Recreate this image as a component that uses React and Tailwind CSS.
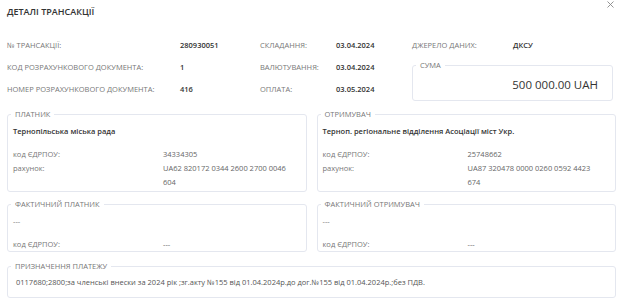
import React from "react";

function Box({ title, className = "", children }) {
  return (
    <fieldset className={"border border-[#e4e7ef] rounded-[3px] " + className}>
      <legend className="ml-[3px] px-[4px] text-[7.5px] leading-[10px] text-[#777] uppercase">{title}</legend>
      {children}
    </fieldset>
  );
}

function Party({ title, name, code, account, labelW }) {
  return (
    <Box title={title} className="flex-1">
      <div className="px-[5px] pt-[5px] pb-[2px] text-[7.5px] leading-[14px]">
        <div className="font-semibold text-[#333]">{name}</div>
        <div className={"mt-[9px] grid " + labelW}>
          <div className="text-[#777]">код ЄДРПОУ:</div>
          <div className="text-[#666]">{code}</div>
          <div className="text-[#777]">рахунок:</div>
          <div className="text-[#666] pr-[8px]">{account}</div>
        </div>
      </div>
    </Box>
  );
}

function Actual({ title, labelW }) {
  return (
    <Box title={title} className="flex-1">
      <div className="px-[5px] pt-[5px] text-[7.5px] leading-[14px]">
        <div className="text-[#777]">---</div>
        <div className={"mt-[9px] grid " + labelW}>
          <div className="text-[#777]">код ЄДРПОУ:</div>
          <div className="text-[#666]">---</div>
        </div>
      </div>
    </Box>
  );
}

export default function App() {
  const label = "text-[#777] text-[7.5px] uppercase";
  const value = "text-[#333] text-[7.5px] font-semibold";
  return (
    <div className="relative w-[623px] h-[298px] bg-white px-[7px] font-['Open_Sans',sans-serif] overflow-hidden">
      <button className="absolute top-[0px] right-[9px] w-[8px] h-[8px] flex items-center justify-center text-[#888]">
        <svg width="7" height="7" viewBox="0 0 7 7" fill="none" stroke="currentColor" strokeWidth="0.9">
          <path d="M0.5 0.5 L6.5 6.5 M6.5 0.5 L0.5 6.5" />
        </svg>
      </button>
      <div className="pt-[5px] text-[9px] leading-[14px] font-semibold text-[#333]">ДЕТАЛІ ТРАНСАКЦІЇ</div>

      <div className="mt-[16px] flex">
        <div className="w-[405px] grid grid-cols-[173px_80px_76px_76px] auto-rows-[22px] items-center">
          <div className={label}>№ ТРАНСАКЦІЇ:</div>
          <div className={value}>280930051</div>
          <div className={label}>СКЛАДАННЯ:</div>
          <div className={value}>03.04.2024</div>
          <div className={label}>КОД РОЗРАХУНКОВОГО ДОКУМЕНТА:</div>
          <div className={value}>1</div>
          <div className={label}>ВАЛЮТУВАННЯ:</div>
          <div className={value}>03.04.2024</div>
          <div className={label}>НОМЕР РОЗРАХУНКОВОГО ДОКУМЕНТА:</div>
          <div className={value}>416</div>
          <div className={label}>ОПЛАТА:</div>
          <div className={value}>03.05.2024</div>
        </div>
        <div className="w-[201px] flex flex-col">
          <div className="h-[22px] flex items-center">
            <div className={label + " w-[101px]"}>ДЖЕРЕЛО ДАНИХ:</div>
            <div className={value}>ДКСУ</div>
          </div>
          <Box title="СУМА" className="mt-[3px]">
            <div className="h-[30px] flex items-center justify-end pr-[14px] text-[11.5px] text-[#333]">500 000.00 UAH</div>
          </Box>
        </div>
      </div>

      <div className="mt-[8px] flex gap-[10px]">
        <Party title="ПЛАТНИК" name="Тернопільська міська рада" code="34334305" account="UA62 820172 0344 2600 2700 0046 604" labelW="grid-cols-[150px_1fr]" />
        <Party title="ОТРИМУВАЧ" name="Терноп. регіональне відділення Асоціації міст Укр." code="25748662" account="UA87 320478 0000 0260 0592 4423 674" labelW="grid-cols-[145px_1fr]" />
      </div>

      <div className="mt-[7px] flex gap-[10px]">
        <Actual title="ФАКТИЧНИЙ ПЛАТНИК" labelW="grid-cols-[150px_1fr]" />
        <Actual title="ФАКТИЧНИЙ ОТРИМУВАЧ" labelW="grid-cols-[145px_1fr]" />
      </div>

      <Box title="ПРИЗНАЧЕННЯ ПЛАТЕЖУ" className="mt-[9px]">
        <div className="px-[8px] pt-[4px] pb-[8px] text-[7.5px] leading-[14px] text-[#555]">
          0117680;2800;за членські внески за 2024 рік ;зг.акту №155 від 01.04.2024р.до дог.№155 від 01.04.2024р.;без ПДВ.
        </div>
      </Box>
    </div>
  );
}
